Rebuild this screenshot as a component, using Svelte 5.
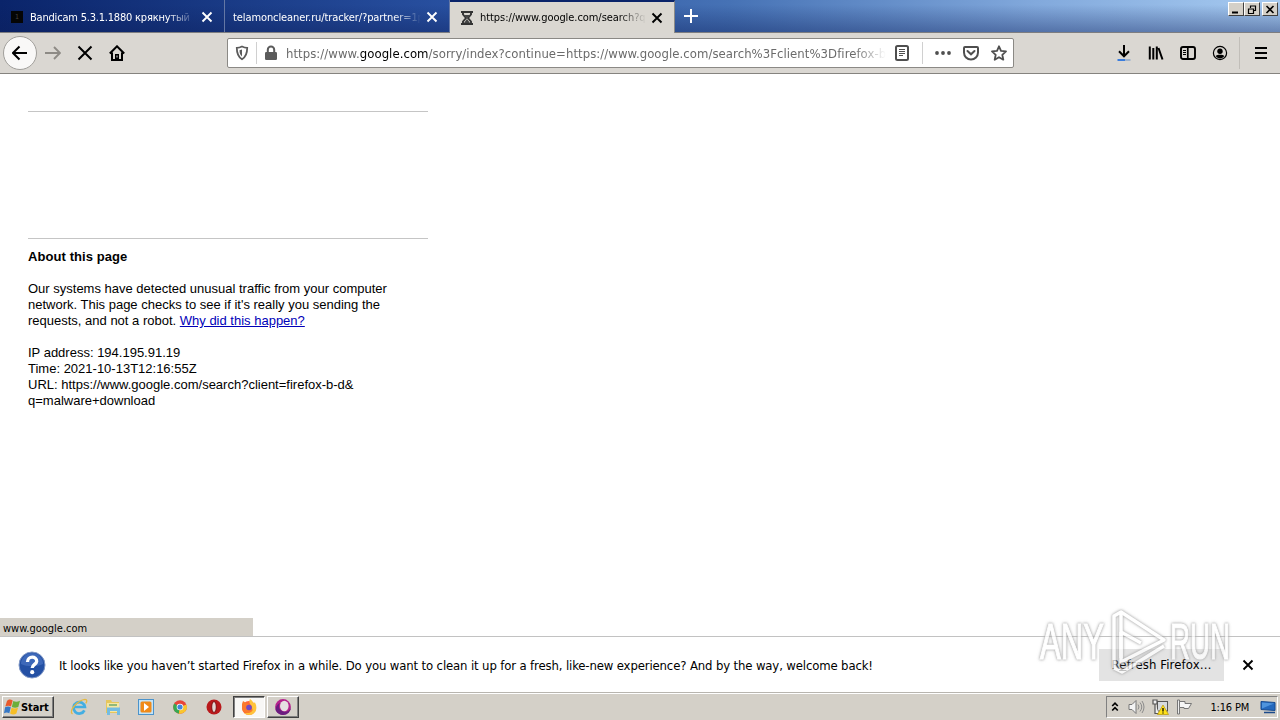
<script>

    let tabs = [
        { title: "Bandicam 5.3.1.1880 крякнутый", icon: "dark", active: false, spacing: -0.2 },
        { title: "telamoncleaner.ru/tracker/?partner=1p", icon: "", active: false, spacing: -0.1 },
        { title: "https://www.google.com/search?q=", icon: "wait", active: true, spacing: -0.06 }
    ];

</script>

<main>

    <header class="titlebar">
        {#each tabs as tab}
            <div class="tab" class:active={tab.active}>
                {#if tab.icon === "dark"}
                    <span class="favicon">1</span>
                {:else if tab.icon === "wait"}
                    <svg class="hourglass" width="16" height="16" viewBox="0 0 16 16">
                        <path d="M2 2h12M2 14h12M4 2v2.500L7 8l-3 3.500V14M12 2v2.500L9 8l3 3.500V14" fill="none" stroke="#333" stroke-width="1.900"/>
                        <path d="M5 5h6L8 8zM8 9l3 4H5z" fill="#444"/>
                    </svg>
                {/if}
                <span class="title" style="letter-spacing: {tab.spacing}px">{tab.title}</span>
                <svg class="close" width="12" height="12" viewBox="0 0 12 12"><path d="M1.500 1.500l9 9M10.500 1.500l-9 9" stroke="currentColor" stroke-width="1.900"/></svg>
            </div>
        {/each}
        <svg class="plus" width="16" height="16" viewBox="0 0 16 16"><path d="M8 1v14M1 8h14" stroke="#fff" stroke-width="2"/></svg>
        <div class="window_buttons">
            <button aria-label="Minimize"><svg width="10" height="9"><path d="M1 7.500h6" stroke="#000" stroke-width="2"/></svg></button>
            <button aria-label="Restore"><svg width="10" height="9"><path d="M3.500 3V1h5v4.500H7M3 1h6M1.500 4h5v4.500h-5zM1 4h6" fill="none" stroke="#000" stroke-width="1.200"/></svg></button>
            <button class="last" aria-label="Close"><svg width="10" height="9"><path d="M1.500 1l7 7M8.500 1l-7 7" stroke="#000" stroke-width="1.600"/></svg></button>
        </div>
    </header>

    <nav class="navbar">
        <div class="back">
            <svg width="16" height="16" viewBox="0 0 16 16"><path d="M15 8H1.500M7.500 1.500L1 8l6.500 6.500" fill="none" stroke="#000" stroke-width="2"/></svg>
        </div>
        <svg class="forward" width="16" height="16" viewBox="0 0 16 16"><path d="M0 8h15M9 2l6 6-6 6" fill="none" stroke="#8d8a85" stroke-width="1.900"/></svg>
        <svg class="stop" width="16" height="16" viewBox="0 0 16 16"><path d="M1.500 1.500l13 13M14.500 1.500l-13 13" stroke="#000" stroke-width="2"/></svg>
        <svg class="home" width="16" height="16" viewBox="0 0 16 16"><path d="M.8 8.500L8 1.300l7.200 7.200M3 7.500V15h10V7.500" fill="none" stroke="#000" stroke-width="2"/><path d="M6 9h4v6H6z"/><path d="M8 10.500v2" stroke="#ddd" stroke-width="1"/></svg>

        <div class="urlbar">
            <svg class="shield" width="14" height="16" viewBox="0 0 14 16"><path d="M7 1.500c2 1 3.500 1.300 5.200 1.300 0 5.500-1.200 9.200-5.200 11.500C3 12 1.800 8.300 1.800 2.800 3.500 2.800 5 2.500 7 1.500z" fill="none" stroke="#5b5b5b" stroke-width="1.800"/><path d="M7 4.500v7C5.200 10 4.500 8 4.500 5.200z" fill="#5b5b5b"/></svg>
            <span class="line"></span>
            <svg class="lock" width="14" height="16" viewBox="0 0 14 16"><path d="M3.800 8V4.800a3.200 3.200 0 016.400 0V8" fill="none" stroke="#5b5b5b" stroke-width="2"/><rect x="1" y="7" width="12" height="8" rx="1.200" fill="#5b5b5b"/></svg>
            <span class="address">https://www.<b>google.com</b>/sorry/index?continue=https://www.google.com/search%3Fclient%3Dfirefox-b-d</span>
            <svg class="reader" width="14" height="16" viewBox="0 0 14 16"><rect x="1" y="1" width="12" height="14" rx="1.500" fill="none" stroke="#4f4f4f" stroke-width="2"/><path d="M4 4.500h6M4 6.500h6M4 8.500h6M4 10.500h4" stroke="#4f4f4f"/></svg>
            <span class="line"></span>
            <svg class="dots" width="16" height="16" viewBox="0 0 16 16" fill="#4f4f4f"><circle cx="2" cy="8" r="1.900"/><circle cx="8" cy="8" r="1.900"/><circle cx="14" cy="8" r="1.900"/></svg>
            <svg class="pocket" width="16" height="16" viewBox="0 0 16 16" fill="none" stroke="#4f4f4f" stroke-width="2"><path d="M2 2h12a1 1 0 011 1v4.500a7 7 0 01-14 0V3a1 1 0 011-1z"/><path d="M4.500 6L8 9.300 11.500 6" stroke-linecap="round"/></svg>
            <svg class="star" width="16" height="16" viewBox="0 0 16 16"><path d="M8 1.300l2 4.600 5 .5-3.700 3.400 1 4.900L8 12.200l-4.300 2.500 1-4.900L1 6.400l5-.5z" fill="none" stroke="#4f4f4f" stroke-width="1.800" stroke-linejoin="round"/></svg>
        </div>

        <div class="tools">
            <svg width="16" height="18" viewBox="0 0 16 18"><path d="M8 1v11M3 7.300l5 5 5-5" fill="none" stroke="#000" stroke-width="2"/><path d="M1.500 16H9" stroke="#3b7ddd" stroke-width="2"/><path d="M9 16h5.500" stroke="#9fb3cd" stroke-width="2"/></svg>
            <svg width="16" height="16" viewBox="0 0 16 16"><path d="M1.800 1.500v13M5.300 3v11.500M8.800 1.500v13M10.500 3l4 11.500" stroke="#000" stroke-width="2"/></svg>
            <svg width="16" height="16" viewBox="0 0 16 16" fill="none" stroke="#000"><rect x="1" y="2" width="14" height="12" rx="2" stroke-width="1.900"/><path d="M7.800 2v12" stroke-width="1.700"/><path d="M3 5.500h3M3 7.500h3M3 9.500h3"/></svg>
            <svg width="16" height="16" viewBox="0 0 16 16"><circle cx="8" cy="8" r="6.600" fill="none" stroke="#000" stroke-width="1.200"/><circle cx="8" cy="6.300" r="2.700"/><path d="M3.700 11c1-1.600 7.600-1.600 8.600 0-1.700 3.200-6.900 3.200-8.600 0z"/></svg>
            <span class="split"></span>
            <svg width="14" height="14" viewBox="0 0 14 14"><path d="M1 2h12M1 7h12M1 12h12" stroke="#000" stroke-width="2"/></svg>
        </div>
    </nav>

    <section class="page">
        <div class="captcha"></div>
        <h1>About this page</h1>
        <p>Our systems have detected unusual traffic from your computer<br>network. This page checks to see if it's really you sending the<br>requests, and not a robot. <a href="#why">Why did this happen?</a></p>
        <p>IP address: 194.195.91.19<br>Time: 2021-10-13T12:16:55Z<br>URL: https://www.google.com/search?client=firefox-b-d&amp;<br>q=malware+download</p>
        <div class="status">www.google.com</div>
    </section>

    <aside class="notice">
        <svg class="help" width="28" height="28" viewBox="0 0 28 28">
            <circle cx="14" cy="14" r="13" fill="#2450a4" stroke="#8198c6"/>
            <path d="M3 13a11 11 0 0122 0c-6 3-16 3-22 0z" fill="#3d68b9"/>
            <path d="M9.500 11c0-6.500 9.500-6 9.200-.7-.2 3-4.500 3.200-4.500 6.700" fill="none" stroke="#fff" stroke-width="3.300"/>
            <circle cx="14.200" cy="21.200" r="2.100" fill="#fff"/>
        </svg>
        <span class="message">It looks like you haven’t started Firefox in a while. Do you want to clean it up for a fresh, like-new experience? And by the way, welcome back!</span>
        <button class="refresh">R<u>e</u>fresh Firefox…</button>
        <svg class="dismiss" width="12" height="12" viewBox="0 0 12 12"><path d="M1.500 1.500l9 9M10.500 1.500l-9 9" stroke="#000" stroke-width="1.900"/></svg>
    </aside>

    <footer class="taskbar">
        <div class="start">
            <svg width="17" height="16" viewBox="0 0 17 16"><path d="M3 2c2-2 3.700-1.700 5.700-.5L7 7.500C5 6.300 3.500 6.500 1.300 7.500z" fill="#e8592b"/><path d="M9.300 2c2 1 4 1 6.700-.2L14.300 8c-2 1-4.300 1-6.500 0z" fill="#6cae3a"/><path d="M1.100 8.300c2-1 3.900-1 5.700 0l-1.500 6C3.500 13 2 13.200 0 14.200z" fill="#3778c5"/><path d="M7.600 8.800c2 1 4.200 1 6.400 0l-1.600 5.700c-2 1.200-4.200 1.200-6.300 0z" fill="#f6be26"/></svg>
            <span>Start</span>
        </div>

        <div class="launch">
            <svg width="18" height="18" viewBox="0 0 18 18"><path d="M14.400 12.300a5.700 5.700 0 11.500-3.300H4.500" fill="none" stroke="#43aee2" stroke-width="2.700"/><path d="M2.500 16C-2 13 8 2 15 1.300c2.500 0 2 2.500.8 4" fill="none" stroke="#e5b940" stroke-width="1.300"/></svg>
            <svg width="18" height="18" viewBox="0 0 18 18"><path d="M2 2h5l1 2h7v11H2z" fill="#e6c65c"/><path d="M3 5h12v9H3z" fill="#f6e7a0"/><path d="M3 9.500h13V17h-3v-4H6v4H3z" fill="#74bce2"/><path d="M5 7h8" stroke="#65a46a" stroke-width="1.400"/></svg>
            <svg width="18" height="18" viewBox="0 0 18 18"><rect x="1.500" y="1.500" width="15" height="15" fill="#c5e3f5" stroke="#4b93cb"/><rect x="3.500" y="3.500" width="11" height="11" rx="1.500" fill="#f08a18"/><path d="M7 5l5 4-5 4z" fill="#fff"/></svg>
            <svg width="18" height="18" viewBox="0 0 18 18"><circle cx="9" cy="9" r="6.800" fill="#e8443a"/><path d="M9 9L3.200 5.500a6.800 6.800 0 004.600 10.200z" fill="#38a852"/><path d="M9 9l6.400-2.500a6.800 6.800 0 01-7.600 9.200z" fill="#f9c62e"/><circle cx="9" cy="9" r="3.300" fill="#fff"/><circle cx="9" cy="9" r="2.600" fill="#4285dc"/></svg>
            <svg width="18" height="18" viewBox="0 0 18 18"><circle cx="9" cy="9" r="7.500" fill="#b9191b"/><ellipse cx="9" cy="9" rx="2.300" ry="5.500" fill="#e2d7d3" stroke="#7d0d0f"/></svg>
        </div>

        <div class="task pressed">
            <svg width="18" height="18" viewBox="0 0 18 18"><circle cx="9" cy="10" r="6.900" fill="#ff6538"/><path d="M10 1c2 1 3 3 3 4l2-.5c3 5 1 12-5 12.500-3 0-5-1-6-2 7 1 10-4 7-8-2-2-2-4-1-6z" fill="#ffc43a"/><path d="M2 6l1-3 3 2 3 1-2 3c1 4 4 4 6 2-1 6-11 5-11-1z" fill="#fb7a2c"/><circle cx="9" cy="9.500" r="2.800" fill="#704ac4"/></svg>
        </div>
        <div class="task">
            <svg width="18" height="18" viewBox="0 0 18 18"><circle cx="9" cy="9" r="7.900" fill="#b5228c"/><path d="M9 17a8 8 0 008-8c-1 4-5 6-9 4-3-1.500-4-5-2-8-4 2-5 6-4 8 1 2 4 4 7 4z" fill="#6b1d80"/><ellipse cx="10.300" cy="8" rx="4.300" ry="5.300" fill="#e6e0e2"/></svg>
        </div>

        <div class="tray">
            <svg width="8" height="12" viewBox="0 0 8 12"><path d="M1.200 5L4 2.200 6.800 5M1.200 9.500L4 6.700l2.800 2.800" fill="none" stroke="#000" stroke-width="1.700"/></svg>
            <svg class="sound" width="17" height="16" viewBox="0 0 17 16"><path d="M1 5.500h3l4-4v13l-4-4H1z" fill="#f4f4f4" stroke="#777"/><path d="M10 5.500q2 2.500 0 5M12 3.500q3.500 4.500 0 9M14 2q4 6 0 12" fill="none" stroke="#8b8b8b"/></svg>
            <svg class="network" width="17" height="16" viewBox="0 0 17 16"><rect x="5.500" y="2.500" width="10" height="9.500" fill="#d7dadd" stroke="#555"/><path d="M1 1h4v4H1zM3 5v9.500h4" fill="#eee" stroke="#555" stroke-width="1.200"/><path d="M11 6l5.500 9.500h-11z" fill="#ffe11a" stroke="#b79705" stroke-width=".7"/><path d="M11 9v3.500M11 13.500v1" stroke="#000" stroke-width="1.300"/></svg>
            <svg class="flag" width="17" height="16" viewBox="0 0 17 16"><path d="M1.500 1h2v14h-2z" fill="#eee" stroke="#777"/><path d="M3.500 2.500H9v2h6.500l-3 5H8v-1H3.500z" fill="#f6f6f6" stroke="#777"/></svg>
            <span class="clock">1:16 PM</span>
            <svg class="desktop" width="16" height="14" viewBox="0 0 16 14"><path d="M1 1.500l14 1v8l-14-1z" fill="#2468bd" stroke="#174b91"/><path d="M2 2.500l12 1L2 8.500z" fill="#4f94dd"/><path d="M4 12.500h11" stroke="#1c4a8a" stroke-width="1.500"/></svg>
        </div>
    </footer>

    <svg class="watermark" width="220" height="84" viewBox="0 0 220 84">
        <text x="7" y="56" textLength="64" lengthAdjust="spacingAndGlyphs">ANY</text>
        <text x="137" y="56" textLength="60" lengthAdjust="spacingAndGlyphs">RUN</text>
        <path d="M81 65V13l7-4v46"/>
        <path d="M88 9l43 28-43 22v-30M88 29l20 11"/>
        <path d="M81 65l8 4 42-26"/>
    </svg>

</main>

<style>

:global(body){
    margin: 0;
    overflow: hidden;
}

main{
    position: relative;
    display: flex;
    flex-direction: column;
    width: 1280px;
    height: 720px;
    overflow: hidden;
    background: #fff;
    color: #000;
    font-family: "DejaVu Sans Condensed", "DejaVu Sans", sans-serif;
    font-stretch: condensed;
    font-size: 11px;
}

svg{
    display: block;
    flex-shrink: 0;
}

button{
    border: none;
    padding: 0;
    font-family: inherit;
}

.titlebar{
    display: flex;
    box-sizing: border-box;
    height: 33px;
    border-bottom: 1px solid #7d7d80;
    background: linear-gradient(to bottom, transparent 15%, rgba(12, 30, 90, 0.4)), linear-gradient(to right, #0a246a, #2850a0 35%, #4672b5 57%, #82a9dc 81%, #a6caf0);
}

.tab{
    display: flex;
    align-items: center;
    box-sizing: border-box;
    width: 225px;
    height: 32px;
    padding: 2px 11px 0 8px;
    border-right: 1px solid #6477a4;
    color: #fff;
}

.tab.active{
    height: 33px;
    border-top: 2px solid #0a246a;
    border-right-color: #8c8b88;
    padding: 0 11px 0 9px;
    background: #dad7d1;
    color: #000;
}

.favicon{
    width: 12px;
    height: 12px;
    margin: 0 7px 0 3px;
    background: #050505;
    color: #444;
    font-size: 7px;
    line-height: 12px;
    text-align: center;
}

.hourglass{
    margin-right: 5px;
}

.title{
    flex: 1;
    overflow: hidden;
    white-space: nowrap;
    mask-image: linear-gradient(to right, #000 calc(100% - 28px), transparent);
    margin-right: 5px;
}

.plus{
    margin: 8px 0 0 8px;
}

.window_buttons{
    display: flex;
    margin: 2px 2px 0 auto;
}

.window_buttons button{
    display: flex;
    align-items: center;
    justify-content: center;
    box-sizing: border-box;
    width: 16px;
    height: 14px;
    border: 1px solid;
    border-color: #fff #404040 #404040 #fff;
    background: #d4d0c8;
}

.window_buttons .last{
    margin-left: 2px;
}

.navbar{
    display: flex;
    align-items: center;
    box-sizing: border-box;
    height: 41px;
    border-bottom: 1px solid #85837f;
    background: #dad7d2;
}

.back{
    display: flex;
    align-items: center;
    justify-content: center;
    box-sizing: border-box;
    width: 34px;
    height: 34px;
    margin-left: 3px;
    border: 1px solid #a19f9b;
    border-radius: 50%;
    background: #f9f8f7;
}

.forward{
    margin-left: 8px;
}

.stop, .home{
    margin-left: 16px;
}

.urlbar{
    display: flex;
    align-items: center;
    box-sizing: border-box;
    width: 787px;
    height: 30px;
    margin-left: 102px;
    padding: 0 6px 0 7px;
    border: 1px solid #8b8985;
    border-radius: 2px;
    background: #fff;
}

.line{
    width: 1px;
    height: 22px;
    background: #d0d0d0;
}

.shield{
    margin-right: 7px;
}

.lock{
    margin: 0 8px 0 7px;
}

.address{
    width: 600px;
    overflow: hidden;
    white-space: nowrap;
    color: #6b6b6b;
    font-size: 13px;
    letter-spacing: 0.05px;
    mask-image: linear-gradient(to right, #000 calc(100% - 32px), transparent);
}

.address b{
    color: #000;
    font-weight: normal;
}

.reader{
    margin: 0 13px 0 9px;
}

.dots{
    margin-left: auto;
}

.pocket, .star{
    margin-left: 12px;
}

.tools{
    display: flex;
    align-items: center;
    gap: 16px;
    margin: 0 12px 0 auto;
}

.split{
    width: 1px;
    height: 32px;
    margin: 0 -2px 0 -5px;
    background: #c1beb9;
}

.page{
    position: relative;
    box-sizing: border-box;
    height: 562px;
    padding: 37px 28px 0;
    font-family: "Liberation Sans", Arial, sans-serif;
    font-size: 13px;
    line-height: 16px;
}

.captcha{
    box-sizing: border-box;
    width: 400px;
    height: 128px;
    border: solid #c5c5c5;
    border-width: 1px 0;
}

h1{
    margin: 9px 0 16px;
    font-size: 13px;
    line-height: 17px;
    letter-spacing: 0.08px;
}

.page p{
    margin: 0 0 16px;
    letter-spacing: 0;
}

a{
    color: #0000b8;
}

.status{
    position: absolute;
    left: 0;
    bottom: 0;
    box-sizing: border-box;
    width: 253px;
    height: 18px;
    padding: 3px 3px 0;
    background: #d4d0c8;
    font-family: "DejaVu Sans Condensed", "DejaVu Sans", sans-serif;
    font-size: 11px;
}

.notice{
    display: flex;
    align-items: center;
    box-sizing: border-box;
    height: 56px;
    border-top: 1px solid #c2c2c2;
    padding: 0 26px 0 18px;
    background: #fff;
    font-size: 13px;
}

.message{
    margin-left: 13px;
    padding-top: 1px;
    white-space: nowrap;
    letter-spacing: -0.137px;
}

.refresh{
    width: 125px;
    height: 32px;
    margin-left: auto;
    background: #e3e3e3;
    color: #000;
    font-size: 13px;
    letter-spacing: 0.12px;
}

.dismiss{
    margin-left: 18px;
}

.taskbar{
    display: flex;
    align-items: center;
    box-sizing: border-box;
    height: 28px;
    border-top: 1px solid #b8b5af;
    box-shadow: inset 0 1px #fff;
    padding: 1px 2px 0;
    background: #d4d0c8;
}

.start, .task{
    display: flex;
    align-items: center;
    box-sizing: border-box;
    height: 22px;
    border: 1px solid;
    border-color: #fff #404040 #404040 #fff;
    box-shadow: inset -1px -1px #808080;
}

.start{
    width: 52px;
    padding-left: 1px;
    font-weight: bold;
}

.start span{
    letter-spacing: -0.1px;
}

.launch{
    display: flex;
    gap: 15.7px;
    margin: 0 8px 0 16px;
}

.task{
    justify-content: center;
    width: 32px;
    margin-left: 2px;
}

.task.pressed{
    border-color: #404040 #fff #fff #404040;
    box-shadow: inset 1px 1px #808080;
    background: #f8f7f5;
}

.tray{
    display: flex;
    align-items: center;
    box-sizing: border-box;
    width: 172px;
    height: 22px;
    margin-left: auto;
    padding: 0 1px 0 4px;
    border: 1px solid;
    border-color: #808080 #fff #fff #808080;
}

.sound{
    margin-left: 9px;
}

.network, .flag{
    margin-left: 7px;
}

.clock{
    margin-left: auto;
    letter-spacing: -0.2px;
    white-space: nowrap;
}

.desktop{
    margin-left: 11px;
}

.watermark{
    position: absolute;
    left: 1033px;
    top: 603px;
    opacity: 0.75;
    pointer-events: none;
    filter: drop-shadow(0 0 1px #999) drop-shadow(0 0 1.5px #bbb);
}

.watermark text{
    fill: #fff;
    stroke: #fff;
    stroke-width: 1.2px;
    font-family: "Liberation Sans", sans-serif;
    font-size: 50px;
}

.watermark path{
    fill: none;
    stroke: #fff;
    stroke-width: 3.5px;
    stroke-linejoin: round;
}

</style>
